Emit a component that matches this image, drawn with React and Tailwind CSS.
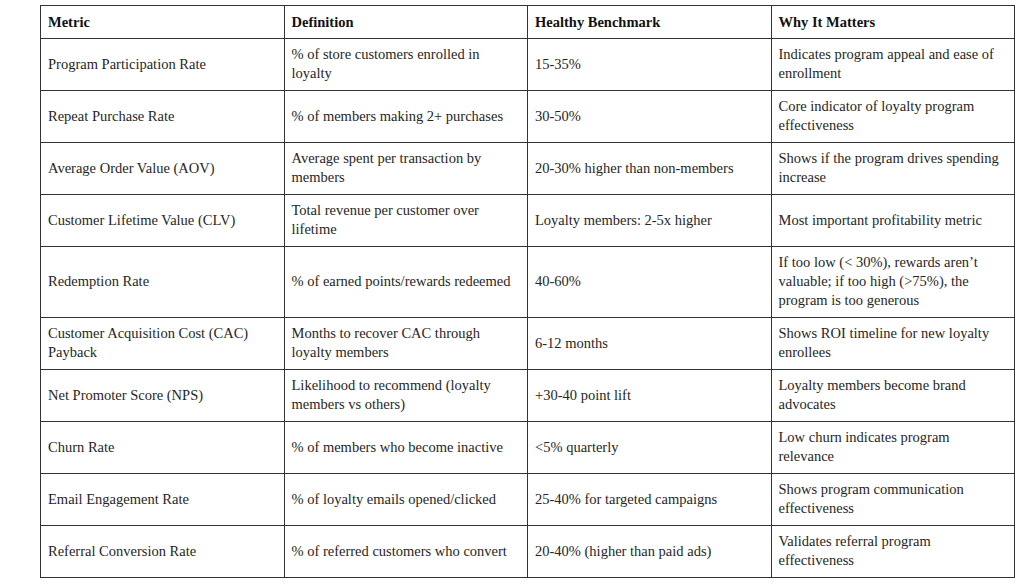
import React from 'react';

const ROWS = [
  [['Program Participation Rate'], ['% of store customers enrolled in', 'loyalty'], ['15-35%'], ['Indicates program appeal and ease of', 'enrollment']],
  [['Repeat Purchase Rate'], ['% of members making 2+ purchases'], ['30-50%'], ['Core indicator of loyalty program', 'effectiveness']],
  [['Average Order Value (AOV)'], ['Average spent per transaction by', 'members'], ['20-30% higher than non-members'], ['Shows if the program drives spending', 'increase']],
  [['Customer Lifetime Value (CLV)'], ['Total revenue per customer over', 'lifetime'], ['Loyalty members: 2-5x higher'], ['Most important profitability metric']],
  [['Redemption Rate'], ['% of earned points/rewards redeemed'], ['40-60%'], ['If too low (< 30%), rewards aren\u2019t', 'valuable; if too high (>75%), the', 'program is too generous']],
  [['Customer Acquisition Cost (CAC)', 'Payback'], ['Months to recover CAC through', 'loyalty members'], ['6-12 months'], ['Shows ROI timeline for new loyalty', 'enrollees']],
  [['Net Promoter Score (NPS)'], ['Likelihood to recommend (loyalty', 'members vs others)'], ['+30-40 point lift'], ['Loyalty members become brand', 'advocates']],
  [['Churn Rate'], ['% of members who become inactive'], ['<5% quarterly'], ['Low churn indicates program', 'relevance']],
  [['Email Engagement Rate'], ['% of loyalty emails opened/clicked'], ['25-40% for targeted campaigns'], ['Shows program communication', 'effectiveness']],
  [['Referral Conversion Rate'], ['% of referred customers who convert'], ['20-40% (higher than paid ads)'], ['Validates referral program', 'effectiveness']],
];

const HEAD = ['Metric', 'Definition', 'Healthy Benchmark', 'Why It Matters'];

export default function App() {
  return (
    <div className="w-[1024px] h-[586px] bg-white overflow-hidden pt-[5px] pl-[40px] font-['Liberation_Serif',serif] text-[14.5px] leading-[19px] text-[#262626]">
      <table className="table-fixed border-collapse w-[975px]">
        <thead>
          <tr className="h-[33px]">
            {HEAD.map(h => (
              <th key={h} className="w-1/4 border border-[#333] px-[7px] text-left align-middle font-bold text-[#111]">{h}</th>
            ))}
          </tr>
        </thead>
        <tbody>
          {ROWS.map((row, i) => (
            <tr key={i} className={row.some(c => c.length > 2) ? 'h-[71px]' : 'h-[52px]'}>
              {row.map((lines, j) => (
                <td key={j} className="border border-[#333] px-[7px] pb-px align-middle">
                  {lines.map((l, k) => (
                    <div key={k} className="whitespace-nowrap">{l}</div>
                  ))}
                </td>
              ))}
            </tr>
          ))}
        </tbody>
      </table>
    </div>
  );
}
